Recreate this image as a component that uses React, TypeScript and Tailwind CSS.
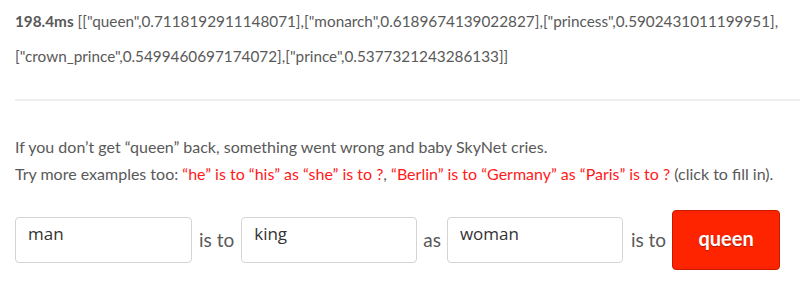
import React from "react";

export default function App() {
  const red = "text-[#ff1a1a]";
  const inputCls =
    "h-[46px] border border-[#d4d4d4] rounded-[4px] px-[12px] pb-[12px] text-[17px] text-[#333] outline-none [font-family:'Open_Sans',sans-serif]";
  return (
    <div className="w-[800px] h-[281px] bg-white overflow-hidden text-[#595959] [font-family:Lato,'Open_Sans',sans-serif]">
      <div className="pl-[15px] pt-[4px] text-[15.3px] leading-[35px]">
        <div>
          <span className="font-bold">198.4ms</span>{" "}
          [["queen",0.7118192911148071],["monarch",0.6189674139022827],["princess",0.5902431011199951],
        </div>
        <div>["crown_prince",0.5499460697174072],["prince",0.5377321243286133]]</div>
      </div>
      <div className="ml-[15px] mt-[25px] h-[2px] bg-[#eeeeee]" />
      <div className="pl-[15px] pt-[32px] text-[16px] leading-[27px]">
        <div>If you don’t get “queen” back, something went wrong and baby SkyNet cries.</div>
        <div>
          Try more examples too:{" "}
          <span className={red}>“he” is to “his” as “she” is to ?</span>,{" "}
          <span className={red}>“Berlin” is to “Germany” as “Paris” is to ?</span> (click to fill in).
        </div>
      </div>
      <div className="flex items-center pl-[15px] pt-[22px]">
        <input readOnly value="man" className={"w-[177px] " + inputCls} />
        <span className="ml-[7px] mr-[7px] pt-[1px] text-[19px]">is to</span>
        <input readOnly value="king" className={"w-[176px] " + inputCls} />
        <span className="ml-[6px] mr-[6px] pt-[1px] text-[19px]">as</span>
        <input readOnly value="woman" className={"w-[176px] " + inputCls} />
        <span className="ml-[8px] mr-[6px] pt-[1px] text-[19px]">is to</span>
        <button className="w-[108px] h-[60px] mt-[1px] bg-[#ff2400] border border-[#c81800] rounded-[4px] text-white text-[20px] font-bold pb-[4px] [text-shadow:0_1px_1px_rgba(0,0,0,0.3)]">
          queen
        </button>
      </div>
    </div>
  );
}
